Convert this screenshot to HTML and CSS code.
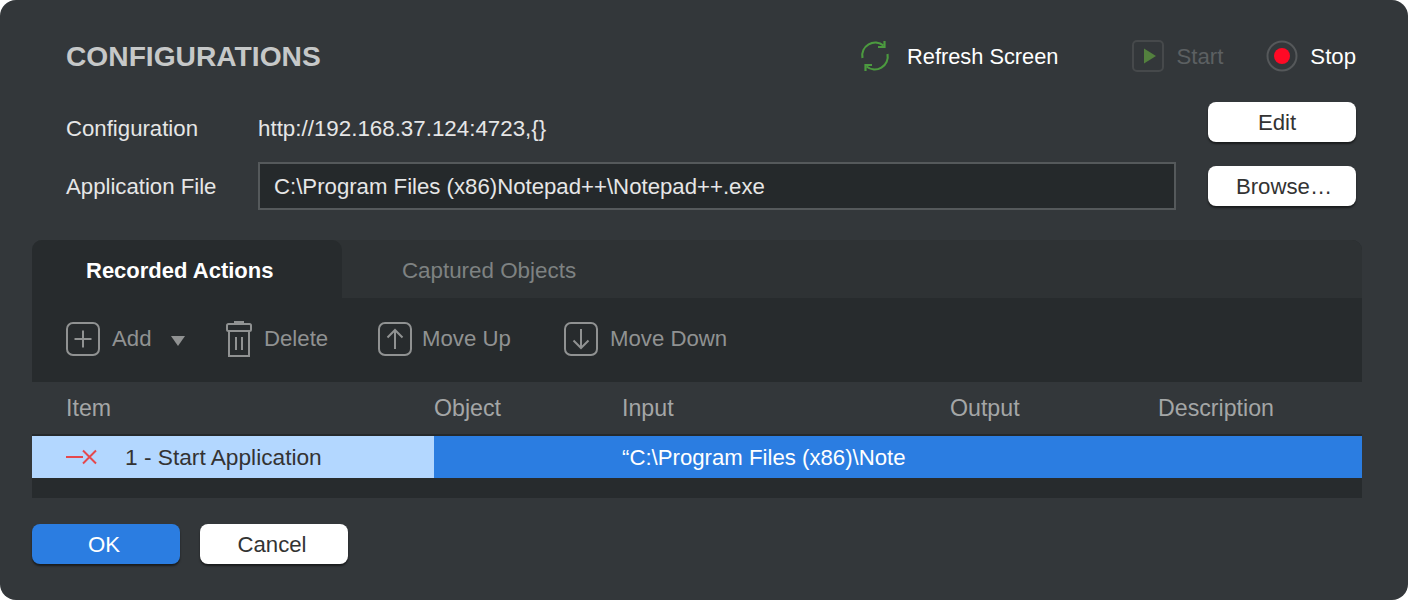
FILE: index.html
```html
<!DOCTYPE html>
<html lang="en">
  <head>
    <meta charset="UTF-8" />
    <title>Configurations</title>
    <link rel="stylesheet" href="styles.css">
  </head>
  <body>
    <main class="dialog">
      <!-- top -->
      <header class="head">
        <h1 class="head-title">CONFIGURATIONS</h1>
        <div class="run-tool refresh">
          <svg width="32" height="32" viewBox="0 0 32 32" fill="none" stroke="#4c9a3f" stroke-width="2.2">
            <path d="M3.500 18a13 13 0 0 1 21-12.500" />
            <path d="M28.500 14a13 13 0 0 1-21 12.500" />
            <path d="M25.500 1v6h-6.500" />
            <path d="M6.500 31v-6h6.500" />
          </svg>
          <span>Refresh Screen</span>
        </div>
        <div class="run-tool start">
          <svg width="32" height="32" viewBox="0 0 32 32">
            <rect x="1" y="1" width="30" height="30" rx="4" fill="none" stroke="#46494b" stroke-width="2" />
            <path d="M12 8.500 24 16 12 23.500z" fill="#53803e" />
          </svg>
          <span>Start</span>
        </div>
        <div class="run-tool stop">
          <svg width="32" height="32" viewBox="0 0 32 32">
            <circle cx="16" cy="16" r="14.500" fill="none" stroke="#55585a" stroke-width="2" />
            <circle cx="16" cy="16" r="8" fill="#ff0a25" />
          </svg>
          <span>Stop</span>
        </div>
      </header>

      <div class="form-row config-row">
        <label class="form-label">Configuration</label>
        <span class="form-value">http://192.168.37.124:4723,{}</span>
        <button class="btn btn-edit">Edit</button>
      </div>
      <div class="form-row file-row">
        <label class="form-label" for="app">Application File</label>
        <input class="form-input" id="app" type="text" value="C:\Program Files (x86)Notepad++\Notepad++.exe" />
        <button class="btn btn-browse">Browse…</button>
      </div>

      <!-- tabs + table -->
      <section class="panel">
        <div class="tabs">
          <div class="tab tab-active">Recorded Actions</div>
          <div class="tab">Captured Objects</div>
        </div>
        <div class="toolbar">
          <div class="tool add">
            <svg width="34" height="34" viewBox="0 0 34 34" fill="none" stroke="#909292" stroke-width="2">
              <rect x="1" y="1" width="32" height="32" rx="6" />
              <path d="M17 8.500v17M8.500 17h17" />
            </svg>
            <span>Add</span>
            <i class="caret"></i>
          </div>
          <div class="tool delete">
            <svg width="26" height="36" viewBox="0 0 26 36" fill="none" stroke="#909292" stroke-width="2">
              <path d="M8 1.500h10" stroke-width="3" />
              <rect x="1" y="3" width="24" height="7" rx="1.500" />
              <path d="M3 10v25h20V10M10 16v13M16 16v13" />
            </svg>
            <span>Delete</span>
          </div>
          <div class="tool move-up">
            <svg width="34" height="34" viewBox="0 0 34 34" fill="none" stroke="#909292" stroke-width="2">
              <rect x="1" y="1" width="32" height="32" rx="6" />
              <path d="M17 27V8M9.500 15.500 17 8l7.500 7.500" />
            </svg>
            <span>Move Up</span>
          </div>
          <div class="tool move-down">
            <svg width="34" height="34" viewBox="0 0 34 34" fill="none" stroke="#909292" stroke-width="2">
              <rect x="1" y="1" width="32" height="32" rx="6" />
              <path d="M17 7v19M9.500 18.500 17 26l7.500-7.500" />
            </svg>
            <span>Move Down</span>
          </div>
        </div>
        <div class="grid grid-head">
          <div class="cell cell-item">Item</div>
          <div class="cell">Object</div>
          <div class="cell">Input</div>
          <div class="cell">Output</div>
          <div class="cell">Description</div>
        </div>
        <div class="grid grid-row">
          <div class="cell cell-item cell-picked">
            <svg width="32" height="16" viewBox="0 0 32 16" fill="none" stroke="#e5484d" stroke-width="2">
              <path d="M0 8h17M17 1.500l13 13M30 1.500l-13 13" />
            </svg>
            <span>1 - Start Application</span>
          </div>
          <div class="cell"></div>
          <div class="cell cell-input">“C:\Program Files (x86)\Note</div>
          <div class="cell"></div>
          <div class="cell"></div>
        </div>
        <div class="panel-foot"></div>
      </section>

      <footer class="actions">
        <button class="btn btn-primary btn-foot">OK</button>
        <button class="btn btn-foot">Cancel</button>
      </footer>
    </main>
  </body>
</html>
```

FILE: styles.css
```css
/* resets */
* {
  padding: 0;
  margin: 0;
  box-sizing: border-box;
}
body {
  font-family: "Liberation Sans", Arial, sans-serif;
  font-size: 22.2px;
  background-color: #fff;
  overflow: hidden;
}

.dialog {
  width: 1408px;
  height: 600px;
  padding: 0 46px 0 32px;
  background-color: #33373a;
  border-radius: 16px;
  color: #e6e6e6;
}

/* header */
.head {
  display: flex;
  align-items: center;
  height: 112px;
  padding: 0 6px 0 34px;
}
.head-title {
  flex: 1;
  font-size: 28.2px;
  font-weight: 700;
  color: #c6c8c8;
}
.run-tool {
  display: flex;
  align-items: center;
  color: #fff;
}
.run-tool span {
  padding-top: 2px;
}
.refresh {
  gap: 16px;
  font-size: 21.8px;
}
.start {
  gap: 12px;
  margin-left: 74px;
  color: #5c6062;
}
.stop {
  gap: 12px;
  margin-left: 43px;
}

/* form */
.form-row {
  display: flex;
  align-items: center;
  padding: 0 6px 0 34px;
}
.config-row {
  height: 44px;
  margin-top: -12px;
}
.file-row {
  height: 48px;
  margin-top: 18px;
}
.form-label {
  width: 192px;
  flex: none;
  padding-top: 2px;
  color: #e6e6e6;
}
.config-row .form-label {
  padding-top: 14px;
}
.form-value {
  flex: 1;
  font-size: 22.35px;
  color: #e6e6e6;
  padding-top: 14px;
}
.form-input {
  width: 918px;
  height: 48px;
  padding: 1px 14px 0;
  margin-right: 32px;
  font: inherit;
  color: #e6e6e6;
  background-color: #25292b;
  border: 2px solid #55595b;
}
.form-input:focus {
  outline: none;
}

/* buttons */
.btn {
  width: 148px;
  height: 40px;
  padding-top: 2px;
  font: inherit;
  color: #333;
  background-color: #fff;
  border: none;
  border-radius: 8px;
  box-shadow: 0 2px 2px rgba(0, 0, 0, 0.5);
  cursor: pointer;
}
.btn-edit {
  padding-right: 10px;
}
.btn-browse {
  padding-left: 4px;
}
.btn-foot {
  padding-right: 4px;
}
.btn-primary {
  color: #fff;
  background-color: #2b7de1;
}

/* panel */
.panel {
  margin-top: 30px;
  background-color: #272b2d;
  border-radius: 10px 10px 0 0;
  overflow: hidden;
}
.tabs {
  display: flex;
  height: 58px;
  background-color: #2e3234;
}
.tab {
  width: 294px;
  line-height: 62px;
  text-align: center;
  font-size: 22.4px;
  color: #7e8282;
}
.tab-active {
  width: 310px;
  padding-left: 54px;
  text-align: left;
  font-size: 22px;
  font-weight: 700;
  color: #fff;
  background-color: #272b2d;
  border-radius: 10px 10px 0 0;
}

.toolbar {
  display: flex;
  align-items: center;
  height: 84px;
  padding: 0 0 2px 34px;
  color: #909292;
}
.tool {
  display: flex;
  align-items: center;
  gap: 12px;
}
.add {
  width: 160px;
}
.caret {
  width: 0;
  height: 0;
  margin-left: 8px;
  margin-top: 4px;
  border-left: 7px solid transparent;
  border-right: 7px solid transparent;
  border-top: 10px solid #909292;
}
.delete {
  width: 152px;
}
.move-up {
  width: 186px;
  gap: 10px;
}

/* table */
.grid {
  display: grid;
  grid-template-columns: 402px 188px 328px 208px 1fr;
}
.grid-head {
  height: 54px;
  align-items: center;
  background-color: #33373a;
  border-bottom: 2px solid #25292b;
  font-size: 23.2px;
  color: #a4a6a6;
}
.grid-row {
  height: 42px;
  background-color: #2b7de1;
  color: #fff;
}
.cell {
  height: 42px;
  line-height: 42px;
}
.cell-item {
  padding-left: 34px;
}
.cell-picked {
  display: flex;
  align-items: center;
  gap: 27px;
  font-size: 22.7px;
  color: #333;
  background-color: #b3d7ff;
}
.cell-input {
  padding-top: 1px;
  white-space: nowrap;
}
.panel-foot {
  height: 20px;
}

/* footer */
.actions {
  display: flex;
  gap: 20px;
  margin-top: 26px;
}
```
